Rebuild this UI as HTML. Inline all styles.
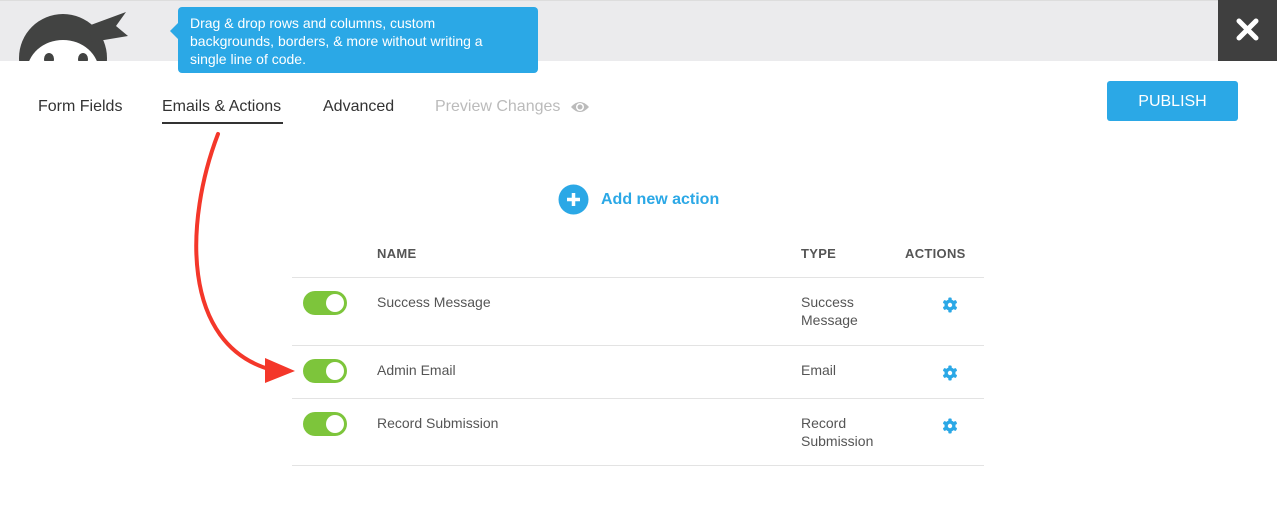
<!DOCTYPE html>
<html><head><meta charset="utf-8"><style>
*{margin:0;padding:0;box-sizing:border-box}
body{width:1277px;height:513px;background:#fff;font-family:"Liberation Sans",sans-serif;position:relative;overflow:hidden;color:#333}
.hdr{position:absolute;left:0;top:0;width:1277px;height:61px;background:#ebebed;border-top:1px solid #ddd}
.x{position:absolute;right:0;top:0;width:59px;height:61px;background:#3f3f3f}
.tip{position:absolute;left:178px;top:7px;width:360px;height:66px;background:#2ba8e6;border-radius:4px;color:#fff;font-size:14px;line-height:18px;padding:7px 20px 7px 12px;font-weight:normal}
.tip:before{content:"";position:absolute;left:-8px;top:16px;border:8px solid transparent;border-left:0;border-right-color:#2ba8e6}
.tab{position:absolute;top:98px;font-size:16px;color:#333}
.pub{position:absolute;left:1107px;top:81px;width:131px;height:40px;background:#2ba8e6;border-radius:3px;color:#fff;font-size:16px;text-align:center;line-height:42px}
.th{position:absolute;top:246px;font-size:13px;font-weight:bold;color:#555;letter-spacing:.3px}
.line{position:absolute;left:292px;width:692px;height:1px;background:#e3e3e3}
.tg{position:absolute;left:303px;width:44px;height:24px;border-radius:12px;background:#7dc53b}
.tg:after{content:"";position:absolute;right:3px;top:3px;width:18px;height:18px;border-radius:50%;background:#fff}
.td{position:absolute;font-size:14px;color:#555;line-height:18px}
.gear{position:absolute;left:942px}
</style></head><body>
<div class="hdr"></div>
<svg style="position:absolute;left:0;top:0" width="140" height="61">
<circle cx="63" cy="58" r="44" fill="#424342"/>
<path d="M88 26 L126 12 L116 26 L128 36 L92 42 Z" fill="#424342"/>
<ellipse cx="63" cy="72" rx="36" ry="32" fill="#fff"/>
<ellipse cx="49" cy="59" rx="5" ry="6" fill="#424342"/>
<ellipse cx="83" cy="59" rx="5" ry="6" fill="#424342"/>
</svg>
<div class="x"><svg width="59" height="61"><path d="M21 21 L38 38 M38 21 L21 38" stroke="#fff" stroke-width="5" stroke-linecap="round"/></svg></div>
<div class="tip">Drag &amp; drop rows and columns, custom backgrounds, borders, &amp; more without writing a single line of code.</div>
<div class="tab" style="left:38px">Form Fields</div>
<div class="tab" style="left:162px">Emails &amp; Actions</div>
<div style="position:absolute;left:162px;top:122px;width:121px;height:2px;background:#333"></div>
<div class="tab" style="left:323px">Advanced</div>
<div class="tab" style="left:435px;color:#bbb">Preview Changes</div>
<svg style="position:absolute;left:570px;top:99px" width="20" height="16"><path d="M1 8 Q10 -2 19 8 Q10 18 1 8Z" fill="#bbb"/><circle cx="10" cy="8" r="4" fill="#fff"/><circle cx="10" cy="8" r="2.5" fill="#bbb"/></svg>
<div class="pub">PUBLISH</div>
<svg style="position:absolute;left:558px;top:184px" width="31" height="31"><circle cx="15.5" cy="15.5" r="15" fill="#2ba8e6"/><path d="M15.5 9v13M9 15.5h13" stroke="#fff" stroke-width="3.5"/></svg>
<div style="position:absolute;left:601px;top:191px;font-size:16px;font-weight:bold;color:#2ba8e6">Add new action</div>
<div class="th" style="left:377px">NAME</div>
<div class="th" style="left:801px">TYPE</div>
<div class="th" style="left:905px">ACTIONS</div>
<div class="line" style="top:277px"></div>
<div class="line" style="top:345px"></div>
<div class="line" style="top:398px"></div>
<div class="line" style="top:465px"></div>
<div class="tg" style="top:291px"></div>
<div class="tg" style="top:359px"></div>
<div class="tg" style="top:412px"></div>
<div class="td" style="left:377px;top:293px">Success Message</div>
<div class="td" style="left:801px;top:293px">Success<br>Message</div>
<div class="td" style="left:377px;top:361px">Admin Email</div>
<div class="td" style="left:801px;top:361px">Email</div>
<div class="td" style="left:377px;top:414px">Record Submission</div>
<div class="td" style="left:801px;top:414px">Record<br>Submission</div>
<svg class="gear" style="top:297px" width="16" height="16" viewBox="0 0 16 16"><g fill="#2ba8e6"><circle cx="8" cy="8" r="5.5"/><rect x="6.3" y="0.5" width="3.4" height="15" rx="1"/><rect x="6.3" y="0.5" width="3.4" height="15" rx="1" transform="rotate(60 8 8)"/><rect x="6.3" y="0.5" width="3.4" height="15" rx="1" transform="rotate(120 8 8)"/></g><circle cx="8" cy="8" r="2.2" fill="#fff"/></svg>
<svg class="gear" style="top:365px" width="16" height="16" viewBox="0 0 16 16"><g fill="#2ba8e6"><circle cx="8" cy="8" r="5.5"/><rect x="6.3" y="0.5" width="3.4" height="15" rx="1"/><rect x="6.3" y="0.5" width="3.4" height="15" rx="1" transform="rotate(60 8 8)"/><rect x="6.3" y="0.5" width="3.4" height="15" rx="1" transform="rotate(120 8 8)"/></g><circle cx="8" cy="8" r="2.2" fill="#fff"/></svg>
<svg class="gear" style="top:418px" width="16" height="16" viewBox="0 0 16 16"><g fill="#2ba8e6"><circle cx="8" cy="8" r="5.5"/><rect x="6.3" y="0.5" width="3.4" height="15" rx="1"/><rect x="6.3" y="0.5" width="3.4" height="15" rx="1" transform="rotate(60 8 8)"/><rect x="6.3" y="0.5" width="3.4" height="15" rx="1" transform="rotate(120 8 8)"/></g><circle cx="8" cy="8" r="2.2" fill="#fff"/></svg>
<svg style="position:absolute;left:0;top:0" width="400" height="400">
<path d="M218 134 C185 220 180 345 272 370" fill="none" stroke="#f4372a" stroke-width="4" stroke-linecap="round"/>
<path d="M265 358 L295 371 L265 383 Z" fill="#f4372a"/>
</svg>
</body></html>
